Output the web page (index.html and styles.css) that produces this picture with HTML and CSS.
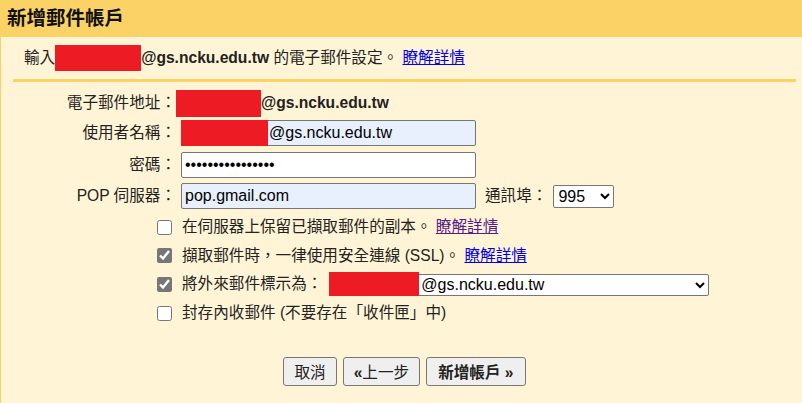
FILE: index.html
```html
<!DOCTYPE html>
<html lang="zh-Hant">
<head>
<meta charset="utf-8">
<title>新增郵件帳戶</title>
<link rel="stylesheet" href="styles.css">
</head>
<body>
<div class="header"><h1 class="title">新增郵件帳戶</h1></div>
<div class="panel">
  <div class="intro">輸入<span class="redact redact-intro"></span><b>@gs.ncku.edu.tw</b>&nbsp;的電子郵件設定。 <a class="link" href="#">瞭解詳情</a></div>
  <div class="form">
    <div class="row row-email"><span class="label">電子郵件地址：</span><span class="redact redact-email"></span><b>@gs.ncku.edu.tw</b></div>
    <div class="row row-user"><label class="label" for="user">使用者名稱：</label><span class="field-wrap"><input id="user" class="field autofill pad-user" value="@gs.ncku.edu.tw"><span class="redact redact-over"></span></span></div>
    <div class="row row-pass"><label class="label" for="pass">密碼：</label><span class="field-wrap"><input id="pass" type="password" class="field" value="abcdefghijklmnop"></span></div>
    <div class="row row-pop"><label class="label" for="pop">POP 伺服器：</label><span class="field-wrap"><input id="pop" class="field autofill" value="pop.gmail.com"></span><label class="port-label" for="port">通訊埠：</label><select id="port" class="port-select"><option>995</option><option>110</option></select></div>
    <div class="checks">
      <label class="check"><input type="checkbox" class="box"><span>在伺服器上保留已擷取郵件的副本。 <a class="link visited" href="#">瞭解詳情</a></span></label>
      <label class="check"><input type="checkbox" class="box" checked><span>擷取郵件時，一律使用安全連線 (SSL)。 <a class="link" href="#">瞭解詳情</a></span></label>
      <div class="check"><input type="checkbox" class="box" checked><span>將外來郵件標示為：</span><span class="sender-wrap"><select class="sender"><option>@gs.ncku.edu.tw</option></select><span class="redact redact-sender"></span></span></div>
      <label class="check"><input type="checkbox" class="box"><span>封存內收郵件 (不要存在「收件匣」中)</span></label>
    </div>
    <div class="actions">
      <button class="btn">取消</button>
      <button class="btn"><b>«</b>上一步</button>
      <button class="btn btn-primary">新增帳戶 »</button>
    </div>
  </div>
</div>
</body>
</html>
```
FILE: styles.css
```css
html, body {
  margin: 0;
  padding: 0;
}
body {
  font-family: "Liberation Sans", "Noto Sans CJK TC", sans-serif;
  font-size: 15.6px;
  color: #222;
  background: #fff5d6;
  line-height: 1.2;
}
.header {
  background: #fad265;
  height: 37px;
  padding-left: 7px;
  padding-top: 1px;
  box-sizing: border-box;
  display: flex;
  align-items: center;
}
.title {
  margin: 0;
  font-size: 19.5px;
  font-weight: bold;
  line-height: 1;
  color: #111;
}
.panel {
  border-left: 1px solid #fad265;
  min-height: calc(100vh - 37px);
}
.intro {
  margin: 0 6px 0 12px;
  padding: 8px 0 8px 11px;
  border-bottom: 3px solid #fad265;
  display: flex;
  align-items: center;
  white-space: pre;
  height: 26px;
}
.redact {
  display: inline-block;
  background: #ed1c24;
  flex: none;
}
.redact-intro {
  width: 86px;
  height: 26px;
}
.link {
  color: #0000ee;
  text-decoration: underline;
}
.link.visited {
  color: #551a8b;
}
.form {
  padding-top: 8px;
}
.row {
  display: flex;
  align-items: center;
}
.label {
  width: 175px;
  flex: none;
  text-align: right;
}
.row-email {
  height: 27px;
}
.redact-email {
  width: 85px;
  height: 27px;
}
.row-user {
  margin-top: 3px;
}
.row-pass {
  margin-top: 6px;
}
.row-pop {
  margin-top: 5px;
}
.field-wrap {
  position: relative;
  display: inline-flex;
  margin-left: 5px;
}
.field {
  width: 295px;
  height: 26px;
  box-sizing: border-box;
  border: 1px solid #767676;
  border-radius: 2px;
  padding: 0 3px;
  margin: 0;
  font-family: "Liberation Sans", sans-serif;
  font-size: 16px;
  color: #000;
  background: #fff;
  outline: none;
}
.field.autofill {
  background: #e8f0fe;
}
.field.pad-user {
  padding-left: 87px;
}
.redact-over {
  position: absolute;
  left: 0;
  top: 0;
  width: 87px;
  height: 100%;
}
.port-label {
  margin-left: 9px;
}
.port-select {
  margin-left: 6px;
  width: 61px;
  height: 23px;
  font-family: "Liberation Sans", sans-serif;
  font-size: 16px;
  color: #000;
  background: #fff;
  border: 1px solid #767676;
  border-radius: 2px;
}
.checks {
  margin-top: 4px;
  padding-left: 156px;
}
.check {
  display: flex;
  align-items: center;
  height: 28.67px;
  white-space: pre;
}
.box {
  width: 15px;
  height: 15px;
  margin: 0 10px 0 0;
  flex: none;
  accent-color: #767676;
}
.sender-wrap {
  position: relative;
  display: inline-flex;
  margin-left: 7px;
}
.sender {
  width: 380px;
  height: 22px;
  padding-left: 87px;
  font-family: "Liberation Sans", sans-serif;
  font-size: 16px;
  color: #000;
  background: #fff;
  border: 1px solid #767676;
  border-radius: 2px;
}
.redact-sender {
  position: absolute;
  left: 0;
  top: -2px;
  width: 90px;
  height: 24px;
}
.actions {
  display: flex;
  justify-content: center;
  gap: 6px;
  margin-top: 29px;
  padding-left: 6px;
}
.btn {
  height: 29px;
  padding: 0 10px;
  border: 1px solid #767676;
  border-radius: 3px;
  background: #efefef;
  font-family: "Liberation Sans", "Noto Sans CJK TC", sans-serif;
  font-size: 15.6px;
  color: #222;
}
.btn-primary {
  font-weight: bold;
  padding: 0 11px;
}
```
